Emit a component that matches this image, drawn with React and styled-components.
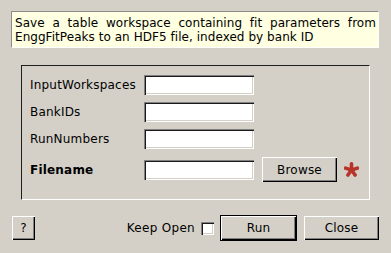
import React from "react";
import styled, { createGlobalStyle } from "styled-components";

const Global = createGlobalStyle`
  html, body { margin: 0; padding: 0; background: #d4d0c8; }
  body { font-family: "DejaVu Sans", "Liberation Sans", sans-serif; font-size: 12px; color: #000; }
  * { box-sizing: border-box; }
`;

const Dialog = styled.div`
  width: 391px;
  height: 253px;
  background: #d4d0c8;
  padding: 11px 12px 0 11px;
  display: flex;
  flex-direction: column;
`;

const Description = styled.div`
  height: 37px;
  flex: none;
  background: #ffffe1;
  border: 1px solid;
  border-color: #8c8c8c #ffffff #ffffff #8c8c8c;
  padding: 4px 2px 0 3px;
  line-height: 14px;
  text-align: justify;
  letter-spacing: 0.05px;
`;

const Group = styled.div`
  margin: 17px 9px 0 10px;
  height: 135px;
  flex: none;
  border: 1px solid;
  border-color: #1e1e1e #ffffff #ffffff #1e1e1e;
  padding: 9px 0 0 8px;
  display: flex;
  flex-direction: column;
  gap: 7px;
`;

const Row = styled.div`
  display: flex;
  align-items: center;
  height: ${(p) => (p.$tall ? "25px" : "20px")};
  margin-top: ${(p) => (p.$tall ? "1px" : "0")};
`;

const Label = styled.div`
  width: 114px;
  font-weight: ${(p) => (p.$bold ? "bold" : "normal")};
  white-space: nowrap;
  letter-spacing: 0.2px;
`;

const Input = styled.input`
  width: 110px;
  height: 20px;
  border: none;
  outline: none;
  background: #fff;
  padding: 0 3px;
  font: inherit;
  box-shadow: inset 1px 1px 0 #808080, inset 2px 2px 0 #1a1a1a,
    inset -1px -1px 0 #ffffff, inset -2px -2px 0 #d4d0c8;
`;

const Button = styled.button`
  width: ${(p) => p.$w}px;
  height: ${(p) => p.$h}px;
  margin-left: ${(p) => p.$ml || 0}px;
  font: inherit;
  letter-spacing: 0.2px;
  color: #000;
  background: #d4d0c8;
  padding: 0;
  border: ${(p) => (p.$default ? "1px solid #000" : "none")};
  box-shadow: inset 1px 1px 0 #ffffff, inset -1px -1px 0 #000000,
    inset -2px -2px 0 #808080;
  flex: none;
`;

const Star = styled.svg`
  margin-left: 7px;
  flex: none;
`;

const Footer = styled.div`
  margin-top: 15px;
  height: 26px;
  flex: none;
  display: flex;
  align-items: center;
  padding-left: 1px;
`;

const Spacer = styled.div`
  flex: 1;
`;

const CheckLabel = styled.span`
  white-space: nowrap;
  letter-spacing: 0.3px;
`;

const Check = styled.span`
  width: 13px;
  height: 13px;
  margin-left: 6px;
  background: #fff;
  flex: none;
  box-shadow: inset 1px 1px 0 #808080, inset 2px 2px 0 #1a1a1a,
    inset -1px -1px 0 #ffffff, inset -2px -2px 0 #d4d0c8;
`;

const Asterisk = () => (
  <Star width="15" height="15" viewBox="0 0 15 15">
    <g stroke="#b8342a" strokeWidth="3.6" strokeLinecap="round">
      <line x1="7.5" y1="8" x2="7.5" y2="1.8" />
      <line x1="7.5" y1="8" x2="13.4" y2="6.1" />
      <line x1="7.5" y1="8" x2="11.1" y2="13" />
      <line x1="7.5" y1="8" x2="3.9" y2="13" />
      <line x1="7.5" y1="8" x2="1.6" y2="6.1" />
    </g>
  </Star>
);

export default function App() {
  return (
    <>
      <Global />
      <Dialog>
        <Description>
          Save a table workspace containing fit parameters from EnggFitPeaks to an HDF5 file, indexed by bank ID
        </Description>
        <Group>
          <Row>
            <Label>InputWorkspaces</Label>
            <Input />
          </Row>
          <Row>
            <Label>BankIDs</Label>
            <Input />
          </Row>
          <Row>
            <Label>RunNumbers</Label>
            <Input />
          </Row>
          <Row $tall>
            <Label $bold>Filename</Label>
            <Input />
            <Button $w={75} $h={25} $ml={8}>Browse</Button>
            <Asterisk />
          </Row>
        </Group>
        <Footer>
          <Button $w={23} $h={24}>?</Button>
          <Spacer />
          <CheckLabel>Keep Open</CheckLabel>
          <Check />
          <Button $w={77} $h={26} $ml={6} $default>Run</Button>
          <Button $w={75} $h={24} $ml={7}>Close</Button>
        </Footer>
      </Dialog>
    </>
  );
}
